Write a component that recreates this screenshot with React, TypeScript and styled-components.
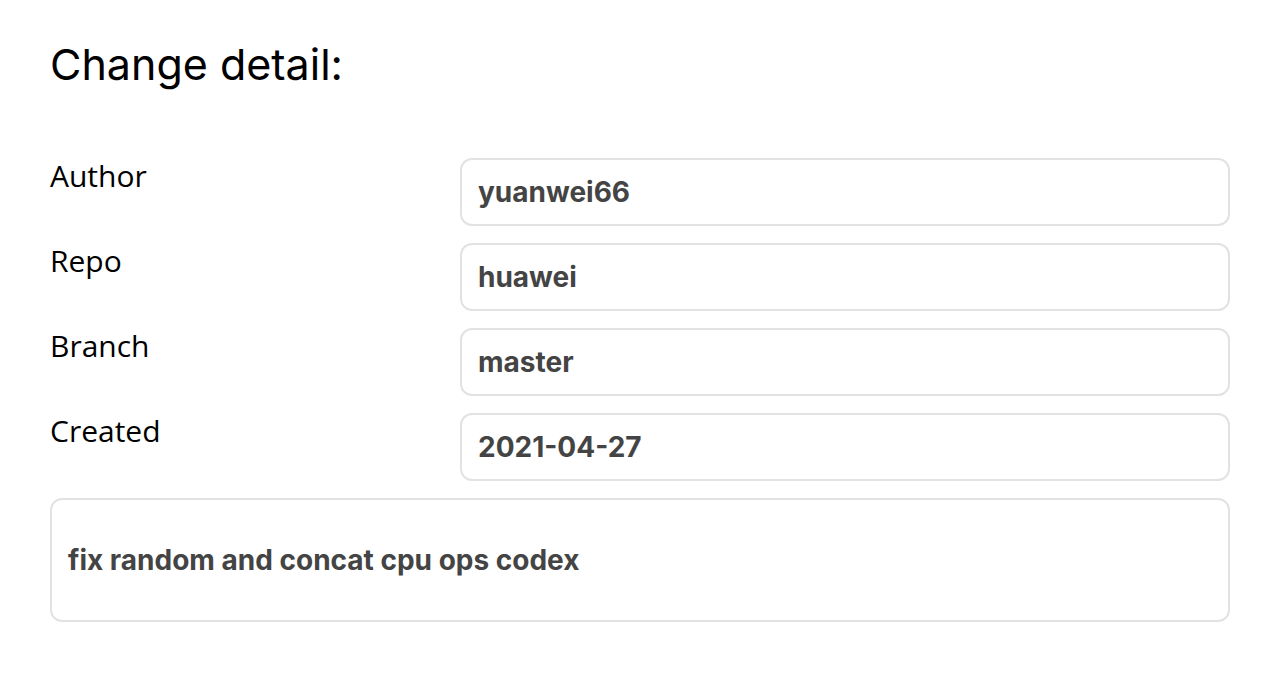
import styled, { createGlobalStyle } from 'styled-components';

const GlobalStyle = createGlobalStyle`
  body {
    margin: 0;
    background: #ffffff;
    font-family: "Open Sans", sans-serif;
  }
`;

const fields = [
  { label: 'Author', value: 'yuanwei66' },
  { label: 'Repo', value: 'huawei' },
  { label: 'Branch', value: 'master' },
  { label: 'Created', value: '2021-04-27' },
];

export default function App() {
  return (
    <>
      <GlobalStyle />
      <Page>
        <Title>Change detail:</Title>
        <FieldList>
          {fields.map((f) => (
            <FieldRow key={f.label}>
              <Label>{f.label}</Label>
              <ValueBox>{f.value}</ValueBox>
            </FieldRow>
          ))}
          <MessageBox>fix random and concat cpu ops codex</MessageBox>
        </FieldList>
      </Page>
    </>
  );
}

const Page = styled.div`
  padding: 34px 58px 0 50px;
  display: flex;
  flex-direction: column;
`;

const Title = styled.h1`
  margin: 0;
  font-family: Inter, "Liberation Sans", sans-serif;
  font-weight: 400;
  font-size: 43px;
  line-height: 60px;
  color: #000;
`;

const FieldList = styled.div`
  margin-top: 64px;
  display: flex;
  flex-direction: column;
  gap: 17px;
`;

const FieldRow = styled.div`
  display: grid;
  grid-template-columns: 410px 1fr;
  align-items: start;
`;

const Label = styled.div`
  font-family: "Open Sans", sans-serif;
  font-size: 30px;
  color: #000;
  line-height: 36px;
`;

const ValueBox = styled.div`
  height: 68px;
  box-sizing: border-box;
  border: 2px solid #e2e2e2;
  border-radius: 12px;
  padding: 0 16px;
  display: flex;
  align-items: center;
  font-family: Inter, Roboto, sans-serif;
  font-weight: 700;
  font-size: 28px;
  color: #444;
`;

const MessageBox = styled(ValueBox)`
  height: 124px;
`;
